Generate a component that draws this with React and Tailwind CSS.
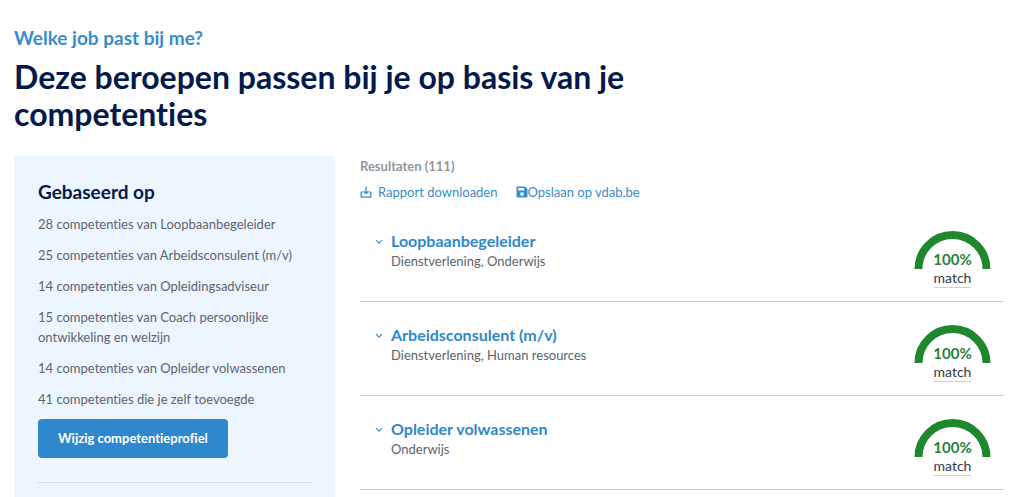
import React from "react";

const competences = [
  "28 competenties van Loopbaanbegeleider",
  "25 competenties van Arbeidsconsulent (m/v)",
  "14 competenties van Opleidingsadviseur",
  "15 competenties van Coach persoonlijke ontwikkeling en welzijn",
  "14 competenties van Opleider volwassenen",
  "41 competenties die je zelf toevoegde",
];

const jobs = [
  { title: "Loopbaanbegeleider", sectors: "Dienstverlening, Onderwijs", score: 100 },
  { title: "Arbeidsconsulent (m/v)", sectors: "Dienstverlening, Human resources", score: 100 },
  { title: "Opleider volwassenen", sectors: "Onderwijs", score: 100 },
];

function DownloadIcon() {
  return (
    <svg className="size-3 shrink-0" viewBox="0 0 12 12" fill="none" stroke="currentColor" strokeWidth="1.3" aria-hidden="true">
      <path d="M6 0.5v7M3.6 5.2 6 7.6l2.4-2.4" />
      <path d="M2.6 6.2H1.2v5h9.6v-5H9.4" strokeLinejoin="round" />
    </svg>
  );
}

function SaveIcon() {
  return (
    <svg className="size-3 shrink-0" viewBox="0 0 12 12" fill="currentColor" fillRule="evenodd" aria-hidden="true">
      <path d="M1.5 0.5h7.6L11.5 3v7a1.5 1.5 0 0 1-1.5 1.5H2A1.5 1.5 0 0 1 0.5 10V1.5a1 1 0 0 1 1-1zM2.2 2v2.4h6V2zM6 6.2a1.9 1.9 0 1 0 0 3.8 1.9 1.9 0 0 0 0-3.8z" />
    </svg>
  );
}

function Match({ score }) {
  return (
    <div className="flex w-[77px] shrink-0 flex-col items-center">
      <div className="relative">
        <svg className="block h-[39px] w-[77px]" viewBox="0 0 77 39" fill="none" aria-hidden="true">
          <path d="M4.5 39a34 34 0 0 1 68 0" stroke="#1f872d" strokeWidth="8" />
        </svg>
        <span className="absolute inset-x-0 bottom-0 text-center text-[15px] leading-5 font-bold text-[#2a7f3c]">
          {score}%
        </span>
      </div>
      <span className="border-b border-[#b5d8f0] text-sm leading-[18px] text-[#333a48]">match</span>
    </div>
  );
}

function JobRow({ job }) {
  return (
    <li className="flex items-start border-b border-[#c9cbd1] pt-[22px] pr-[13px] pb-[13px] pl-[15px]">
      <svg className="mt-2 mr-2 size-2 shrink-0 text-[#3a8dcb]" viewBox="0 0 8 8" fill="none" stroke="currentColor" strokeWidth="1.2" aria-hidden="true">
        <path d="M1 2.2 4 5.2 7 2.2" />
      </svg>
      <div className="min-w-0 flex-1">
        <h3 className="text-base leading-[22px] font-bold">
          <a href="#" className="text-[#2f88cb]">{job.title}</a>
        </h3>
        <p className="text-[13px] leading-[18px] text-[#5d636e]">{job.sectors}</p>
      </div>
      <Match score={job.score} />
    </li>
  );
}

export default function App() {
  return (
    <main className="h-screen overflow-hidden bg-white pt-[26px] pr-5 pl-[14px] font-['Lato',sans-serif] [font-variant-ligatures:none]">
      <p className="text-[19px] leading-6 font-bold text-[#378cca]">Welke job past bij me?</p>
      <h1 className="mt-2 max-w-[640px] text-[32px] leading-[37px] font-bold text-[#041a4d]">
        Deze beroepen passen bij je op basis van je competenties
      </h1>

      <div className="mt-6 flex items-start gap-[25px]">
        <aside className="w-1/3 max-w-[321px] shrink-0 rounded-t bg-[#edf6fe] p-6">
          <h2 className="text-[19px] leading-6 font-bold text-[#041a4d]">Gebaseerd op</h2>
          <ul className="mt-[10px] flex flex-col gap-[11px] text-[13px] leading-5 text-[#5d636e]">
            {competences.map((text) => (
              <li key={text}>{text}</li>
            ))}
          </ul>
          <button className="mt-[10px] h-[39px] cursor-pointer rounded bg-[#2f88cd] px-5 pt-px text-[13px] font-bold text-white">
            Wijzig competentieprofiel
          </button>
          <hr className="mt-6 mb-6 border-[#d3dbe6]" />
        </aside>

        <section className="min-w-0 flex-1">
          <h2 className="text-[13px] leading-5 font-bold text-[#92969f]">Resultaten (111)</h2>
          <div className="mt-[6px] flex gap-[18px] text-[13px] leading-5 text-[#378cca]">
            <a href="#" className="flex items-center gap-[6px]">
              <DownloadIcon />
              Rapport downloaden
            </a>
            <a href="#" className="flex items-center">
              <SaveIcon />
              Opslaan op vdab.be
            </a>
          </div>
          <ul className="mt-[6px]">
            {jobs.map((job) => (
              <JobRow key={job.title} job={job} />
            ))}
          </ul>
        </section>
      </div>
    </main>
  );
}
